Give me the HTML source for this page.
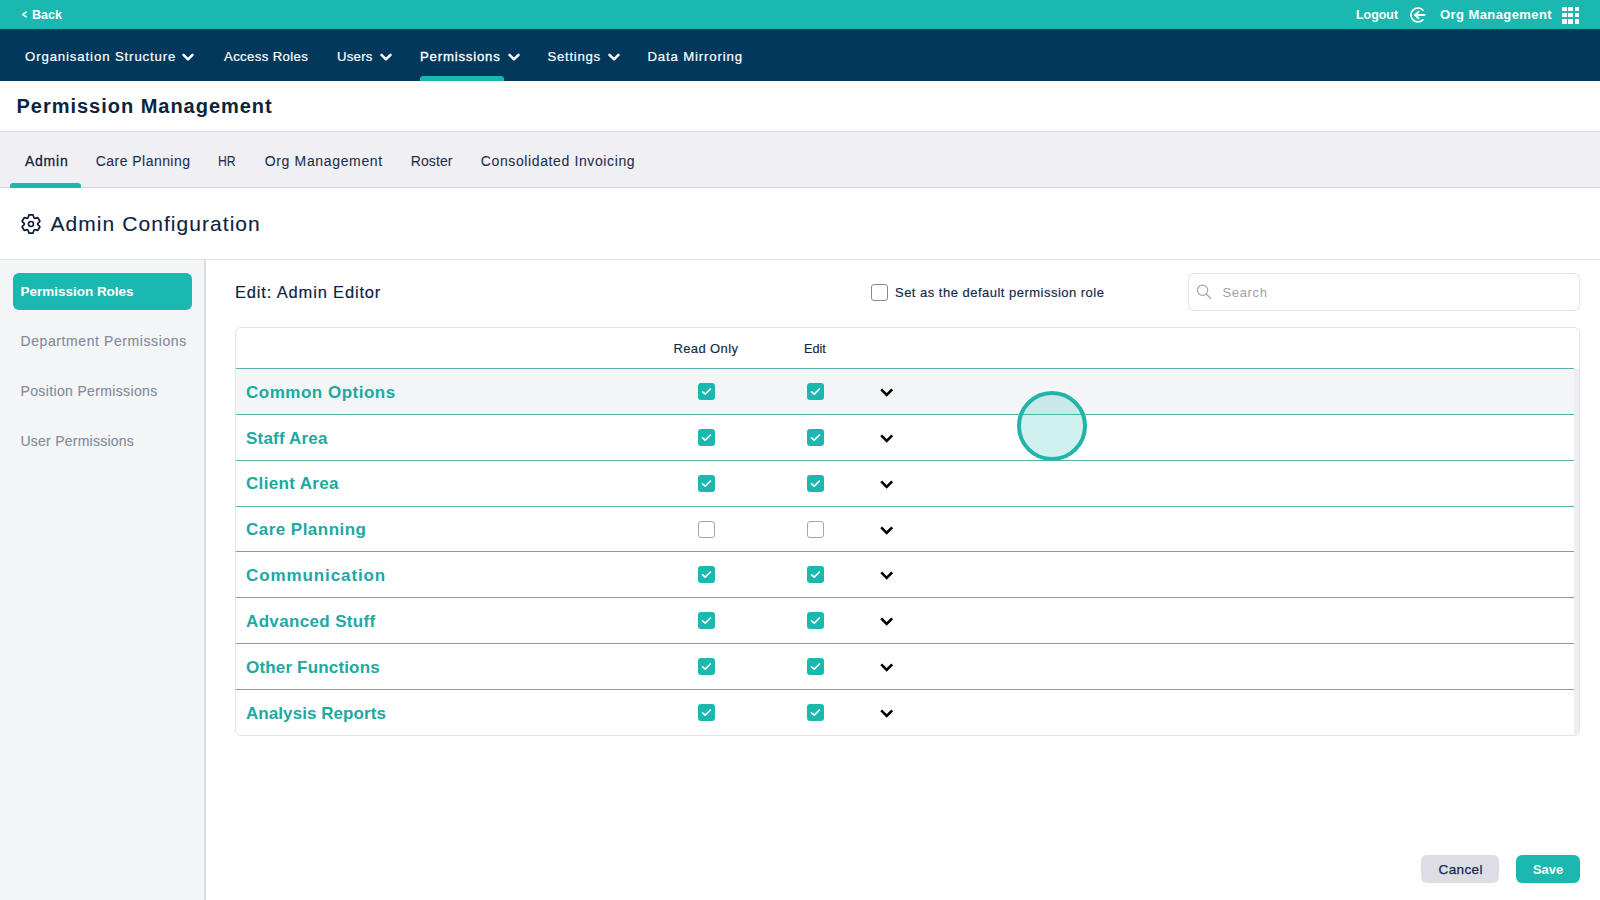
<!DOCTYPE html>
<html><head><meta charset="utf-8"><style>
*{margin:0;padding:0;box-sizing:border-box}
html,body{width:1600px;height:900px;overflow:hidden;background:#fff;font-family:"Liberation Sans",sans-serif}
.abs{position:absolute}
.t{position:absolute;white-space:pre;display:block}
.cb{position:absolute;width:17px;height:17px;border-radius:3px}
.cb.on{background:#1bb8b0}
.cb.on svg{position:absolute;left:0;top:0}
.cb.off{border:1.5px solid #a3a6ad;background:#fff}
</style></head><body>
<div class="abs" style="left:0;top:0;width:1600px;height:29px;background:#1bb8b0"></div>
<svg class="abs" style="left:20px;top:9px" width="10" height="11" viewBox="0 0 10 11"><polyline points="6.2,3.2 2.8,5.5 6.2,7.8" fill="none" stroke="#fff" stroke-width="1.6" stroke-linecap="round" stroke-linejoin="round"/></svg>
<svg class="abs" style="left:1407px;top:5px" width="20" height="20" viewBox="0 0 20 20"><path d="M15.9,5.1 A7,7 0 1 0 15.9,14.9" fill="none" stroke="#fff" stroke-width="1.7" stroke-linecap="round"/><line x1="8.2" y1="10" x2="17.6" y2="10" stroke="#fff" stroke-width="1.8" stroke-linecap="round"/><polyline points="11.6,6.6 8.1,10 11.6,13.4" fill="none" stroke="#fff" stroke-width="1.8" stroke-linecap="round" stroke-linejoin="round"/></svg>
<div class="abs" style="left:1562.2px;top:6.7px;width:4.5px;height:4.5px;background:#fff;border-radius:0.5px"></div><div class="abs" style="left:1562.2px;top:12.9px;width:4.5px;height:4.5px;background:#fff;border-radius:0.5px"></div><div class="abs" style="left:1562.2px;top:19.1px;width:4.5px;height:4.5px;background:#fff;border-radius:0.5px"></div><div class="abs" style="left:1568.4px;top:6.7px;width:4.5px;height:4.5px;background:#fff;border-radius:0.5px"></div><div class="abs" style="left:1568.4px;top:12.9px;width:4.5px;height:4.5px;background:#fff;border-radius:0.5px"></div><div class="abs" style="left:1568.4px;top:19.1px;width:4.5px;height:4.5px;background:#fff;border-radius:0.5px"></div><div class="abs" style="left:1574.6px;top:6.7px;width:4.5px;height:4.5px;background:#fff;border-radius:0.5px"></div><div class="abs" style="left:1574.6px;top:12.9px;width:4.5px;height:4.5px;background:#fff;border-radius:0.5px"></div><div class="abs" style="left:1574.6px;top:19.1px;width:4.5px;height:4.5px;background:#fff;border-radius:0.5px"></div>
<div class="abs" style="left:0;top:29px;width:1600px;height:52px;background:#02385b"></div>
<svg class="abs" style="left:182.3px;top:52.7px" width="12" height="9" viewBox="0 0 12 9"><polyline points="1.5,1.8 6,6.3 10.5,1.8" fill="none" stroke="#fff" stroke-width="2.5" stroke-linecap="round" stroke-linejoin="round"/></svg><svg class="abs" style="left:380px;top:52.7px" width="12" height="9" viewBox="0 0 12 9"><polyline points="1.5,1.8 6,6.3 10.5,1.8" fill="none" stroke="#fff" stroke-width="2.5" stroke-linecap="round" stroke-linejoin="round"/></svg><svg class="abs" style="left:507.5px;top:52.7px" width="12" height="9" viewBox="0 0 12 9"><polyline points="1.5,1.8 6,6.3 10.5,1.8" fill="none" stroke="#fff" stroke-width="2.5" stroke-linecap="round" stroke-linejoin="round"/></svg><svg class="abs" style="left:607.5px;top:52.7px" width="12" height="9" viewBox="0 0 12 9"><polyline points="1.5,1.8 6,6.3 10.5,1.8" fill="none" stroke="#fff" stroke-width="2.5" stroke-linecap="round" stroke-linejoin="round"/></svg>
<div class="abs" style="left:420px;top:76px;width:84px;height:5px;background:#1bb8b0;border-radius:3px 3px 0 0"></div>
<div class="abs" style="left:0;top:131px;width:1600px;height:57px;background:#f0f0f4;border-top:1px solid #dcdde2;border-bottom:1px solid #d6d7dc"></div>
<div class="abs" style="left:10px;top:183px;width:71px;height:5px;background:#1bb8b0;border-radius:3px 3px 0 0"></div>
<svg class="abs" style="left:19.8px;top:212.8px" width="22" height="22" viewBox="0 0 22 22"><path fill="none" stroke="#0d1b2e" stroke-width="1.7" stroke-linejoin="round" d="M8.00 5.01L8.90 1.90L13.10 1.90L14.00 5.01A6.70 6.70 0 0 1 14.69 5.41L17.83 4.63L19.93 8.27L17.69 10.60A6.70 6.70 0 0 1 17.69 11.40L19.93 13.73L17.83 17.37L14.69 16.59A6.70 6.70 0 0 1 14.00 16.99L13.10 20.10L8.90 20.10L8.00 16.99A6.70 6.70 0 0 1 7.31 16.59L4.17 17.37L2.07 13.73L4.31 11.40A6.70 6.70 0 0 1 4.31 10.60L2.07 8.27L4.17 4.63L7.31 5.41A6.70 6.70 0 0 1 8.00 5.01Z"/><circle cx="11" cy="11" r="2.5" fill="none" stroke="#0d1b2e" stroke-width="1.6"/></svg>
<div class="abs" style="left:0;top:259px;width:1600px;height:1px;background:#e2e3e8"></div>
<div class="abs" style="left:0;top:260px;width:204px;height:640px;background:#f4f5f7"></div>
<div class="abs" style="left:204px;top:260px;width:2px;height:640px;background:#d9dbe1"></div>
<div class="abs" style="left:12.7px;top:272.7px;width:179px;height:37px;background:#1bb8b0;border-radius:6px"></div>
<div class="abs" style="left:871px;top:284px;width:17px;height:17px;border:1.5px solid #878c95;border-radius:3px"></div>
<div class="abs" style="left:1188px;top:273px;width:392px;height:37.5px;border:1px solid #e2e3e6;border-radius:6px"></div>
<svg class="abs" style="left:1195px;top:283px" width="18" height="18" viewBox="0 0 18 18"><circle cx="7.6" cy="7.2" r="5.1" fill="none" stroke="#a2a5ae" stroke-width="1.2"/><line x1="11.3" y1="11" x2="15.8" y2="15.6" stroke="#a2a5ae" stroke-width="1.3" stroke-linecap="round"/></svg>
<div class="abs" style="left:235px;top:327px;width:1345px;height:409px;border:1px solid #e3e4e8;border-radius:6px"></div>
<div class="abs" style="left:236px;top:369px;width:1338px;height:45px;background:#f4f5f7"></div>
<div class="abs" style="left:1574px;top:369px;width:5px;height:366px;background:#efeff3"></div>
<div class="abs" style="left:236px;top:368px;width:1338px;height:1px;background:#56b3ad"></div><div class="cb on" style="left:698px;top:383px"><svg width="17" height="17" viewBox="0 0 17 17"><polyline points="4.6,8.8 7.2,11.2 12.4,6" fill="none" stroke="#fff" stroke-width="1.7" stroke-linecap="round" stroke-linejoin="round"/></svg></div><div class="cb on" style="left:806.5px;top:383px"><svg width="17" height="17" viewBox="0 0 17 17"><polyline points="4.6,8.8 7.2,11.2 12.4,6" fill="none" stroke="#fff" stroke-width="1.7" stroke-linecap="round" stroke-linejoin="round"/></svg></div><svg class="abs" style="left:879px;top:387.0px" width="16" height="11" viewBox="0 0 16 11"><polyline points="2.2,2.3 7.7,7.8 13.2,2.3" fill="none" stroke="#000" stroke-width="2.6" stroke-linecap="butt" stroke-linejoin="miter"/></svg><div class="abs" style="left:236px;top:414px;width:1338px;height:1px;background:#56b3ad"></div><div class="cb on" style="left:698px;top:429px"><svg width="17" height="17" viewBox="0 0 17 17"><polyline points="4.6,8.8 7.2,11.2 12.4,6" fill="none" stroke="#fff" stroke-width="1.7" stroke-linecap="round" stroke-linejoin="round"/></svg></div><div class="cb on" style="left:806.5px;top:429px"><svg width="17" height="17" viewBox="0 0 17 17"><polyline points="4.6,8.8 7.2,11.2 12.4,6" fill="none" stroke="#fff" stroke-width="1.7" stroke-linecap="round" stroke-linejoin="round"/></svg></div><svg class="abs" style="left:879px;top:432.85699999999997px" width="16" height="11" viewBox="0 0 16 11"><polyline points="2.2,2.3 7.7,7.8 13.2,2.3" fill="none" stroke="#000" stroke-width="2.6" stroke-linecap="butt" stroke-linejoin="miter"/></svg><div class="abs" style="left:236px;top:460px;width:1338px;height:1px;background:#56b3ad"></div><div class="cb on" style="left:698px;top:475px"><svg width="17" height="17" viewBox="0 0 17 17"><polyline points="4.6,8.8 7.2,11.2 12.4,6" fill="none" stroke="#fff" stroke-width="1.7" stroke-linecap="round" stroke-linejoin="round"/></svg></div><div class="cb on" style="left:806.5px;top:475px"><svg width="17" height="17" viewBox="0 0 17 17"><polyline points="4.6,8.8 7.2,11.2 12.4,6" fill="none" stroke="#fff" stroke-width="1.7" stroke-linecap="round" stroke-linejoin="round"/></svg></div><svg class="abs" style="left:879px;top:478.714px" width="16" height="11" viewBox="0 0 16 11"><polyline points="2.2,2.3 7.7,7.8 13.2,2.3" fill="none" stroke="#000" stroke-width="2.6" stroke-linecap="butt" stroke-linejoin="miter"/></svg><div class="abs" style="left:236px;top:506px;width:1338px;height:1px;background:#56b3ad"></div><div class="cb off" style="left:698px;top:521px"></div><div class="cb off" style="left:806.5px;top:521px"></div><svg class="abs" style="left:879px;top:524.571px" width="16" height="11" viewBox="0 0 16 11"><polyline points="2.2,2.3 7.7,7.8 13.2,2.3" fill="none" stroke="#000" stroke-width="2.6" stroke-linecap="butt" stroke-linejoin="miter"/></svg><div class="abs" style="left:236px;top:551px;width:1338px;height:1px;background:#56b3ad"></div><div class="cb on" style="left:698px;top:566px"><svg width="17" height="17" viewBox="0 0 17 17"><polyline points="4.6,8.8 7.2,11.2 12.4,6" fill="none" stroke="#fff" stroke-width="1.7" stroke-linecap="round" stroke-linejoin="round"/></svg></div><div class="cb on" style="left:806.5px;top:566px"><svg width="17" height="17" viewBox="0 0 17 17"><polyline points="4.6,8.8 7.2,11.2 12.4,6" fill="none" stroke="#fff" stroke-width="1.7" stroke-linecap="round" stroke-linejoin="round"/></svg></div><svg class="abs" style="left:879px;top:570.428px" width="16" height="11" viewBox="0 0 16 11"><polyline points="2.2,2.3 7.7,7.8 13.2,2.3" fill="none" stroke="#000" stroke-width="2.6" stroke-linecap="butt" stroke-linejoin="miter"/></svg><div class="abs" style="left:236px;top:597px;width:1338px;height:1px;background:#56b3ad"></div><div class="cb on" style="left:698px;top:612px"><svg width="17" height="17" viewBox="0 0 17 17"><polyline points="4.6,8.8 7.2,11.2 12.4,6" fill="none" stroke="#fff" stroke-width="1.7" stroke-linecap="round" stroke-linejoin="round"/></svg></div><div class="cb on" style="left:806.5px;top:612px"><svg width="17" height="17" viewBox="0 0 17 17"><polyline points="4.6,8.8 7.2,11.2 12.4,6" fill="none" stroke="#fff" stroke-width="1.7" stroke-linecap="round" stroke-linejoin="round"/></svg></div><svg class="abs" style="left:879px;top:616.285px" width="16" height="11" viewBox="0 0 16 11"><polyline points="2.2,2.3 7.7,7.8 13.2,2.3" fill="none" stroke="#000" stroke-width="2.6" stroke-linecap="butt" stroke-linejoin="miter"/></svg><div class="abs" style="left:236px;top:643px;width:1338px;height:1px;background:#56b3ad"></div><div class="cb on" style="left:698px;top:658px"><svg width="17" height="17" viewBox="0 0 17 17"><polyline points="4.6,8.8 7.2,11.2 12.4,6" fill="none" stroke="#fff" stroke-width="1.7" stroke-linecap="round" stroke-linejoin="round"/></svg></div><div class="cb on" style="left:806.5px;top:658px"><svg width="17" height="17" viewBox="0 0 17 17"><polyline points="4.6,8.8 7.2,11.2 12.4,6" fill="none" stroke="#fff" stroke-width="1.7" stroke-linecap="round" stroke-linejoin="round"/></svg></div><svg class="abs" style="left:879px;top:662.142px" width="16" height="11" viewBox="0 0 16 11"><polyline points="2.2,2.3 7.7,7.8 13.2,2.3" fill="none" stroke="#000" stroke-width="2.6" stroke-linecap="butt" stroke-linejoin="miter"/></svg><div class="abs" style="left:236px;top:689px;width:1338px;height:1px;background:#56b3ad"></div><div class="cb on" style="left:698px;top:704px"><svg width="17" height="17" viewBox="0 0 17 17"><polyline points="4.6,8.8 7.2,11.2 12.4,6" fill="none" stroke="#fff" stroke-width="1.7" stroke-linecap="round" stroke-linejoin="round"/></svg></div><div class="cb on" style="left:806.5px;top:704px"><svg width="17" height="17" viewBox="0 0 17 17"><polyline points="4.6,8.8 7.2,11.2 12.4,6" fill="none" stroke="#fff" stroke-width="1.7" stroke-linecap="round" stroke-linejoin="round"/></svg></div><svg class="abs" style="left:879px;top:707.999px" width="16" height="11" viewBox="0 0 16 11"><polyline points="2.2,2.3 7.7,7.8 13.2,2.3" fill="none" stroke="#000" stroke-width="2.6" stroke-linecap="butt" stroke-linejoin="miter"/></svg>
<div class="abs" style="left:1017px;top:391px;width:70px;height:70px;border-radius:50%;border:4px solid #20b4ab;background:rgba(27,184,176,0.2)"></div>
<div class="abs" style="left:1421.3px;top:855px;width:78px;height:28px;background:#dcdde5;border-radius:6px"></div>
<div class="abs" style="left:1516px;top:855px;width:64px;height:28px;background:#1bb8b0;border-radius:6px"></div>
<span class="t" id="back" style="left:32.00px;top:8.39px;font-size:13px;line-height:13px;color:#ffffff;letter-spacing:0.000px;font-weight:700;transform:scaleX(0.9686);transform-origin:0 0;">Back</span><span class="t" id="logout" style="left:1356.00px;top:7.99px;font-size:13px;line-height:13px;color:#ffffff;letter-spacing:0.000px;font-weight:700;transform:scaleX(0.9562);transform-origin:0 0;">Logout</span><span class="t" id="orgm" style="left:1440.00px;top:7.99px;font-size:13px;line-height:13px;color:#ffffff;letter-spacing:0.415px;font-weight:700;">Org Management</span><span class="t" id="n1" style="left:25.00px;top:49.52px;font-size:13.2px;line-height:13.2px;color:#ffffff;letter-spacing:0.881px;-webkit-text-stroke:0.2px #ffffff;">Organisation Structure</span><span class="t" id="n2" style="left:224.00px;top:49.52px;font-size:13.2px;line-height:13.2px;color:#ffffff;letter-spacing:0.364px;-webkit-text-stroke:0.2px #ffffff;">Access Roles</span><span class="t" id="n3" style="left:337.00px;top:49.52px;font-size:13.2px;line-height:13.2px;color:#ffffff;letter-spacing:0.250px;-webkit-text-stroke:0.2px #ffffff;">Users</span><span class="t" id="n4" style="left:420.00px;top:49.52px;font-size:13.2px;line-height:13.2px;color:#ffffff;letter-spacing:0.800px;-webkit-text-stroke:0.32px #ffffff;">Permissions</span><span class="t" id="n5" style="left:547.50px;top:49.52px;font-size:13.2px;line-height:13.2px;color:#ffffff;letter-spacing:0.714px;-webkit-text-stroke:0.2px #ffffff;">Settings</span><span class="t" id="n6" style="left:647.50px;top:49.52px;font-size:13.2px;line-height:13.2px;color:#ffffff;letter-spacing:0.846px;-webkit-text-stroke:0.2px #ffffff;">Data Mirroring</span><span class="t" id="pm" style="left:16.50px;top:95.57px;font-size:20px;line-height:20px;color:#0a2540;letter-spacing:0.980px;font-weight:700;">Permission Management</span><span class="t" id="tab1" style="left:25.00px;top:153.85px;font-size:14px;line-height:14px;color:#0d2340;letter-spacing:0.750px;-webkit-text-stroke:0.28px #0d2340;">Admin</span><span class="t" id="tab2" style="left:95.75px;top:153.85px;font-size:14px;line-height:14px;color:#1d3150;letter-spacing:0.458px;-webkit-text-stroke:0.1px #1d3150;">Care Planning</span><span class="t" id="tab3" style="left:217.75px;top:153.85px;font-size:14px;line-height:14px;color:#1d3150;letter-spacing:0.000px;transform:scaleX(0.8722);transform-origin:0 0;-webkit-text-stroke:0.1px #1d3150;">HR</span><span class="t" id="tab4" style="left:264.75px;top:153.85px;font-size:14px;line-height:14px;color:#1d3150;letter-spacing:0.654px;-webkit-text-stroke:0.1px #1d3150;">Org Management</span><span class="t" id="tab5" style="left:410.75px;top:153.85px;font-size:14px;line-height:14px;color:#1d3150;letter-spacing:0.100px;-webkit-text-stroke:0.1px #1d3150;">Roster</span><span class="t" id="tab6" style="left:480.75px;top:153.85px;font-size:14px;line-height:14px;color:#1d3150;letter-spacing:0.619px;-webkit-text-stroke:0.1px #1d3150;">Consolidated Invoicing</span><span class="t" id="ac" style="left:50.50px;top:213.02px;font-size:21px;line-height:21px;color:#0c2240;letter-spacing:1.056px;-webkit-text-stroke:0.1px #0c2240;">Admin Configuration</span><span class="t" id="s1" style="left:20.50px;top:284.57px;font-size:13.5px;line-height:13.5px;color:#ffffff;letter-spacing:-0.013px;font-weight:700;">Permission Roles</span><span class="t" id="s2" style="left:20.50px;top:334.35px;font-size:14px;line-height:14px;color:#838c9a;letter-spacing:0.590px;-webkit-text-stroke:0.15px #838c9a;">Department Permissions</span><span class="t" id="s3" style="left:20.50px;top:384.15px;font-size:14px;line-height:14px;color:#838c9a;letter-spacing:0.358px;-webkit-text-stroke:0.15px #838c9a;">Position Permissions</span><span class="t" id="s4" style="left:20.50px;top:433.95px;font-size:14px;line-height:14px;color:#838c9a;letter-spacing:0.240px;-webkit-text-stroke:0.15px #838c9a;">User Permissions</span><span class="t" id="ed" style="left:235.00px;top:284.13px;font-size:16.5px;line-height:16.5px;color:#0c2240;letter-spacing:0.835px;-webkit-text-stroke:0.15px #0c2240;">Edit: Admin Editor</span><span class="t" id="def" style="left:895.00px;top:286.49px;font-size:13px;line-height:13px;color:#10284a;letter-spacing:0.485px;-webkit-text-stroke:0.15px #10284a;">Set as the default permission role</span><span class="t" id="srch" style="left:1222.50px;top:286.29px;font-size:13px;line-height:13px;color:#9a9fb0;letter-spacing:0.640px;">Search</span><span class="t" id="ro" style="left:673.50px;top:341.99px;font-size:13px;line-height:13px;color:#10284a;letter-spacing:0.375px;-webkit-text-stroke:0.15px #10284a;">Read Only</span><span class="t" id="edh" style="left:803.50px;top:341.99px;font-size:13px;line-height:13px;color:#10284a;letter-spacing:0.000px;transform:scaleX(0.9746);transform-origin:0 0;-webkit-text-stroke:0.15px #10284a;">Edit</span><span class="t" id="r0" style="left:246.00px;top:383.71px;font-size:17px;line-height:17px;color:#20a8a1;letter-spacing:0.508px;font-weight:700;">Common Options</span><span class="t" id="r1" style="left:246.00px;top:429.56px;font-size:17px;line-height:17px;color:#20a8a1;letter-spacing:0.200px;font-weight:700;">Staff Area</span><span class="t" id="r2" style="left:246.00px;top:475.42px;font-size:17px;line-height:17px;color:#20a8a1;letter-spacing:0.340px;font-weight:700;">Client Area</span><span class="t" id="r3" style="left:246.00px;top:521.28px;font-size:17px;line-height:17px;color:#20a8a1;letter-spacing:0.467px;font-weight:700;">Care Planning</span><span class="t" id="r4" style="left:246.00px;top:567.13px;font-size:17px;line-height:17px;color:#20a8a1;letter-spacing:0.900px;font-weight:700;">Communication</span><span class="t" id="r5" style="left:246.00px;top:612.99px;font-size:17px;line-height:17px;color:#20a8a1;letter-spacing:0.354px;font-weight:700;">Advanced Stuff</span><span class="t" id="r6" style="left:246.00px;top:658.85px;font-size:17px;line-height:17px;color:#20a8a1;letter-spacing:0.171px;font-weight:700;">Other Functions</span><span class="t" id="r7" style="left:246.00px;top:704.71px;font-size:17px;line-height:17px;color:#20a8a1;letter-spacing:0.067px;font-weight:700;">Analysis Reports</span><span class="t" id="cancel" style="left:1438.50px;top:863.47px;font-size:13.5px;line-height:13.5px;color:#13284a;letter-spacing:0.400px;-webkit-text-stroke:0.25px #13284a;">Cancel</span><span class="t" id="save" style="left:1533.00px;top:863.47px;font-size:13.5px;line-height:13.5px;color:#ffffff;letter-spacing:0.000px;font-weight:700;transform:scaleX(0.9532);transform-origin:0 0;">Save</span>
</body></html>
